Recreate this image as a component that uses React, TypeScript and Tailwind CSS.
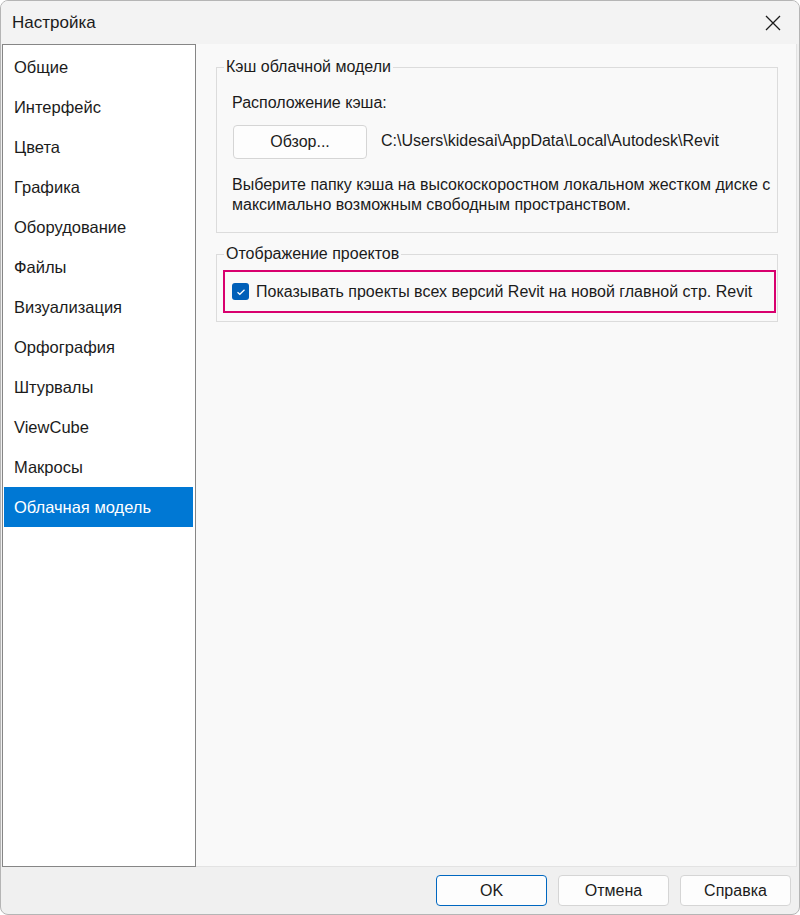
import { type ReactNode } from 'react'
import clsx from 'clsx'

const NAV_ITEMS = [
  'Общие',
  'Интерфейс',
  'Цвета',
  'Графика',
  'Оборудование',
  'Файлы',
  'Визуализация',
  'Орфография',
  'Штурвалы',
  'ViewCube',
  'Макросы',
  'Облачная модель'
]

const ACTIVE = 'Облачная модель'

const GroupBox = ({ title, children, className }: { title: string; children: ReactNode; className?: string }) => {
  return (
    <div className={clsx('relative border border-[#dcdcdc]', className)}>
      <div className="absolute -top-[12px] left-[7px] bg-[#f9f9f9] px-[2px] leading-[22px]">{title}</div>
      {children}
    </div>
  )
}

const FooterButton = ({ label, primary }: { label: string; primary?: boolean }) => {
  return (
    <button
      className={clsx(
        'h-[31px] w-[111px] rounded-[4px] bg-[#fdfdfd] text-[16px] text-[#1b1b1b]',
        primary ? 'border border-[#0067c0]' : 'border border-[#d5d5d5]'
      )}
    >
      {label}
    </button>
  )
}

const App = () => {
  return (
    <div className="h-[915px] w-[800px] bg-white font-['Liberation_Sans',sans-serif] text-[16px] text-[#1b1b1b]">
      <div className="flex h-full w-full flex-col overflow-hidden rounded-[8px] border border-[#b5b5b5] bg-[#f0f0f0]">
        <div className="flex h-[43px] shrink-0 items-center justify-between bg-[#f3f3f3] pl-[11px] pr-[18px]">
          <span className="text-[17px]">Настройка</span>
          <svg width="16" height="16" viewBox="0 0 16 16" className="text-[#1b1b1b]">
            <path d="M1 1L15 15M15 1L1 15" stroke="currentColor" strokeWidth="1.3" />
          </svg>
        </div>

        <div className="flex h-[823px] shrink-0 pl-[1px] pr-[2px]">
          <div className="w-[194px] shrink-0 border border-[#868686] bg-white px-[1px] py-[2px]">
            {NAV_ITEMS.map((it) => (
              <div
                key={it}
                className={clsx(
                  'flex h-[40px] items-center pl-[10px] text-[16.5px]',
                  it === ACTIVE ? 'mr-[1px] bg-[#0078d4] text-white' : 'text-[#1b1b1b]'
                )}
              >
                {it}
              </div>
            ))}
          </div>

          <div className="flex-1 border-r border-b border-[#e3e3e3] bg-[#f9f9f9] pl-[20px] pr-[18px] pt-[23px]">
            <GroupBox title="Кэш облачной модели" className="h-[166px]">
              <div className="pl-[15px] pt-[24px]">
                <div className="leading-[22px]">Расположение кэша:</div>
                <div className="mt-[11px] flex items-center">
                  <button className="ml-[1px] h-[34px] w-[134px] rounded-[4px] border border-[#d5d5d5] bg-[#fdfdfd] text-[16px]">
                    Обзор...
                  </button>
                  <span className="ml-[14px] -mt-[2px]">C:\Users\kidesai\AppData\Local\Autodesk\Revit</span>
                </div>
                <div className="mt-[16px] leading-[20px]">
                  Выберите папку кэша на высокоскоростном локальном жестком диске с
                  <br />
                  максимально возможным свободным пространством.
                </div>
              </div>
            </GroupBox>

            <GroupBox title="Отображение проектов" className="mt-[21px] h-[68px]">
              <div className="ml-[6px] mr-[1px] mt-[15px] flex h-[43px] items-center border-2 border-[#d8006e] pl-[7px]">
                <span className="flex h-[17px] w-[17px] items-center justify-center rounded-[3px] bg-[#005fb8]">
                  <svg width="10" height="8" viewBox="0 0 10 8">
                    <path d="M1.5 4.2L3.8 6.3L8.5 1.7" stroke="white" strokeWidth="1.2" fill="none" />
                  </svg>
                </span>
                <span className="ml-[7px]">Показывать проекты всех версий Revit на новой главной стр. Revit</span>
              </div>
            </GroupBox>
          </div>
        </div>

        <div className="flex flex-1 items-center justify-end gap-[11px] pr-[8px]">
          <FooterButton label="OK" primary />
          <FooterButton label="Отмена" />
          <FooterButton label="Справка" />
        </div>
      </div>
    </div>
  )
}

export default App
